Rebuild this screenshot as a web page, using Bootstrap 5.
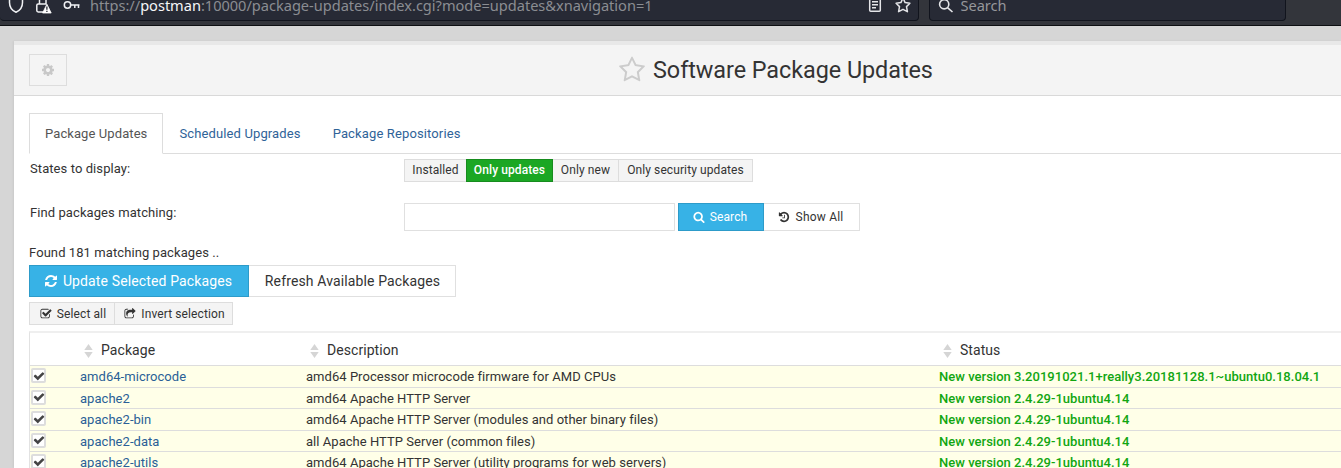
<!DOCTYPE html>
<html lang="en">
<head>
<meta charset="utf-8">
<title>Software Package Updates</title>
<link href="https://cdn.jsdelivr.net/npm/bootstrap@5.3.0/dist/css/bootstrap.min.css" rel="stylesheet">
<style>
body{font-family:Roboto,"Liberation Sans",sans-serif;font-size:13px;line-height:18px;letter-spacing:.08px;color:#333;background:#d6d6d6;height:468px;overflow:hidden}
a{text-decoration:none}
.ico{width:1em;height:1em;fill:currentColor;flex:none}
/* browser toolbar */
.toolbar{height:26px;background:#33353b;border-bottom:1px solid #0d0f12;font-family:"Noto Sans",sans-serif;font-size:14.6px;letter-spacing:-.02px;color:#8b8d92}
.field{height:21px;background:#272a35;border:1px solid #11141d;border-top:0;border-radius:0 0 4px 4px}
.field svg{flex:none;display:block}
.url{width:919px;padding-left:6px;border-left:0}
.find{width:357px;margin-left:10px;padding-left:8px}
.txt{height:21px;line-height:20px;margin-top:-5px;white-space:pre}
.url b{font-weight:400;color:#f5f6f8}
/* page panel */
.panel{margin:15px 0 0 14px;height:427px;background:#fff;overflow:hidden;box-shadow:-1px 0 2px rgba(0,0,0,.06)}
.head{height:55px;border-top:4px solid #e8e8e8;border-bottom:1px solid #d9d9d9;background:#f4f4f4;padding-left:15px}
.btn.gear{width:38px;height:32px;border:1px solid #ddd;border-radius:0;color:#c8c8c8;font-size:14px;padding:0}
.head h1{font-size:23.4px;line-height:30px;letter-spacing:-.05px;margin:0;color:#333}
.content{padding-left:15px}
.nav-tabs{margin-top:17px;height:41px;border-bottom:1px solid #ddd;flex-wrap:nowrap}
.nav-tabs .nav-link{height:41px;padding:11px 15px 0;border-radius:0;line-height:18px;letter-spacing:.13px;color:#2f6398;margin:0}
.nav-tabs .nav-link.active{color:#555;border-color:#ddd #ddd #fff;letter-spacing:.09px}
.lbl{width:375px;padding:1px 0 0 1px;flex:none}
.btn{--bs-btn-border-radius:0;border-radius:0;letter-spacing:.1px;display:flex;align-items:center;justify-content:center;padding:0;color:#333;background:#fff;border:1px solid #e0e0e0}
.btn-tiny{height:23px;font-size:12px;line-height:21px;background:#f4f4f4;border-color:#ddd}
.btn-mid{height:28px;font-size:12px}
.btn-big{height:32px;font-size:14px;letter-spacing:.13px}
.btn-go{background:#37b2e6;border-color:#2d9bc9;color:#fff}
.btn-on{background:#1ba724;border-color:#178c1e;color:#fff;font-weight:500}
.box{width:271px;height:28px;border:1px solid #e0e0e0;border-radius:0;padding:0 8px}
.pkgs{width:1320px;table-layout:fixed;border-left:1px solid #e2e2e2;border-top:2px solid #efefef;margin-top:6px;border-collapse:separate;border-spacing:0}
.pkgs th{height:33px;font-size:14px;font-weight:400;padding:1px 0 0 4px;border-bottom:1px solid #ddd;vertical-align:middle;letter-spacing:.06px}
.pkgs td{height:21.5px;padding:1px 0 0;border-bottom:1px solid #ddd;background:#ffffe8;line-height:19.5px;vertical-align:top;white-space:nowrap;letter-spacing:.04px}
.pkgs td a{color:#2a5f97}
.pkgs td.new{color:#11a611;font-weight:500;letter-spacing:.02px}
.sort{width:9px;height:14px;margin-right:8px;fill:#d5d5d5}
.tick{width:15px;height:15px;margin:1px 0 0 1px;border:2px solid #ddd;border-radius:2px;background:#fff;color:#444;display:flex;align-items:center;justify-content:center;font-size:12px}
</style>
<script src="https://cdn.jsdelivr.net/npm/bootstrap@5.3.0/dist/js/bootstrap.bundle.min.js"></script>
</head>
<body>
<svg width="0" height="0" class="d-none">
<symbol id="search" viewBox="0 0 1792 1792"><path d="M1216 832q0-185-131.500-316.500t-316.500-131.500-316.500 131.500-131.500 316.500 131.500 316.500 316.500 131.500 316.500-131.500 131.500-316.500zm512 832q0 52-38 90t-90 38q-54 0-90-38l-343-342q-179 124-399 124-143 0-273.500-55.500t-225-150-150-225-55.500-273.500 55.500-273.500 150-225 225-150 273.500-55.500 273.500 55.500 225 150 150 225 55.500 273.500q0 220-124 399l343 343q37 37 37 90z"/></symbol>
<symbol id="cog" viewBox="0 0 1792 1792"><path d="M1152 896q0-106-75-181t-181-75-181 75-75 181 75 181 181 75 181-75 75-181zm512-109v222q0 12-8 23t-20 13l-185 28q-19 54-39 91 35 50 107 138 10 12 10 25t-9 23q-27 37-99 108t-94 71q-12 0-26-9l-138-108q-44 23-91 38-16 136-29 186-7 28-36 28h-222q-14 0-24.500-8.500t-11.500-21.500l-28-184q-49-16-90-37l-141 107q-10 9-25 9-14 0-25-11-126-114-165-168-7-10-7-23 0-12 8-23 15-21 51-66.500t54-70.500q-27-50-41-99l-183-27q-13-2-21-12.500t-8-23.500v-222q0-12 8-23t19-13l186-28q14-46 39-92-40-57-107-138-10-12-10-24 0-10 9-23 26-36 98.500-107.500t94.500-71.500q13 0 26 10l138 107q44-23 91-38 16-136 29-186 7-28 36-28h222q14 0 24.500 8.500t11.500 21.500l28 184q49 16 90 37l142-107q9-9 24-9 13 0 25 10 129 119 165 170 7 8 7 22 0 12-8 23-15 21-51 66.500t-54 70.500q26 50 41 98l183 28q13 2 21 12.500t8 23.500z"/></symbol>
<symbol id="staro" viewBox="0 0 1792 1792"><path d="M1201 1004l306-297-422-62-189-382-189 382-422 62 306 297-73 421 378-199 377 199zm527-357q0 22-26 48l-363 354 86 500q1 7 1 20 0 50-41 50-19 0-40-12l-449-236-449 236q-22 12-40 12-21 0-31.500-14.500t-10.500-35.500q0-6 2-20l86-500-364-354q-25-27-25-48 0-37 56-46l502-73 225-455q19-41 49-41t49 41l225 455 502 73q56 9 56 46z"/></symbol>
<symbol id="refresh" viewBox="0 0 1792 1792"><path d="M1639 1056q0 5-1 7-64 268-268 434.500t-478 166.500q-146 0-282.500-55t-243.500-157l-129 129q-19 19-45 19t-45-19-19-45v-448q0-26 19-45t45-19h448q26 0 45 19t19 45-19 45l-137 137q71 66 161 102t187 36q134 0 250-65t186-179q11-17 53-117 8-23 30-23h192q13 0 22.500 9.500t9.500 22.500zm25-800v448q0 26-19 45t-45 19h-448q-26 0-45-19t-19-45 19-45l138-138q-148-137-349-137-134 0-250 65t-186 179q-11 17-53 117-8 23-30 23h-199q-13 0-22.500-9.500t-9.500-22.500v-7q65-268 270-434.500t480-166.500q146 0 284 55.500t245 156.500l130-129q19-19 45-19t45 19 19 45z"/></symbol>
<symbol id="history" viewBox="0 0 1792 1792"><path d="M1664 896q0 156-61 298t-164 245-245 164-298 61q-172 0-327-72.500t-264-204.500q-7-10-6.500-22.500t8.500-20.500l137-138q10-9 25-9 16 2 23 12 73 95 179 147t225 52q104 0 198.500-40.500t163.500-109.500 109.500-163.500 40.500-198.500-40.500-198.500-109.500-163.500-163.500-109.500-198.500-40.500q-98 0-188 35.500t-160 101.500l137 138q31 30 14 69-17 40-59 40h-448q-26 0-45-19t-19-45v-448q0-42 40-59 39-17 69 14l130 129q107-101 244.500-156.500t284.500-55.500q156 0 298 61t245 164 164 245 61 298zm-640-288v448q0 14-9 23t-23 9h-320q-14 0-23-9t-9-23v-64q0-14 9-23t23-9h224v-352q0-14 9-23t23-9h64q14 0 23 9t9 23z"/></symbol>
<symbol id="checksq" viewBox="0 0 1792 1792"><path d="M1472 930v318q0 119-84.500 203.500t-203.500 84.500h-832q-119 0-203.500-84.500t-84.500-203.500v-832q0-119 84.500-203.500t203.500-84.500h832q63 0 117 25 15 7 18 23 3 17-9 29l-49 49q-10 10-23 10-3 0-9-2-23-6-45-6h-832q-66 0-113 47t-47 113v832q0 66 47 113t113 47h832q66 0 113-47t47-113v-254q0-13 9-22l64-64q10-10 23-10 6 0 12 3 20 8 20 29zm231-489l-814 814q-24 24-57 24t-57-24l-430-430q-24-24-24-57t24-57l110-110q24-24 57-24t57 24l263 263 647-647q24-24 57-24t57 24l110 110q24 24 24 57t-24 57z"/></symbol>
<symbol id="share" viewBox="0 0 1792 1792"><path d="M1472 989v259q0 119-84.500 203.500t-203.500 84.500h-832q-119 0-203.500-84.500t-84.500-203.500v-832q0-119 84.500-203.500t203.500-84.500h255q13 0 22.500 9.500t9.500 22.500q0 27-26 32-77 26-133 60-10 4-16 4h-112q-66 0-113 47t-47 113v832q0 66 47 113t113 47h832q66 0 113-47t47-113v-214q0-19 18-29 28-13 54-37 16-16 35-8 21 9 21 29zm237-496l-384 384q-18 19-45 19-12 0-25-5-39-17-39-59v-192h-160q-323 0-438 131-119 137-74 473 3 23-20 34-8 2-12 2-16 0-26-13-10-14-21-31t-39.500-68.500-49.500-99.500-38.500-114-17.500-122q0-49 3.500-91t14-90 28-88 47-81.500 68.500-74 94.500-61.500 124.500-48.500 159.500-30.500 196.500-11h160v-192q0-42 39-59 13-5 25-5 26 0 45 19l384 384q19 19 19 45t-19 45z"/></symbol>
<symbol id="check" viewBox="0 0 1792 1792"><path d="M1671 566q0 40-28 68l-724 724-136 136q-28 28-68 28t-68-28l-136-136-362-362q-28-28-28-68t28-68l136-136q28-28 68-28t68 28l294 295 656-657q28-28 68-28t68 28l136 136q28 28 28 68z"/></symbol>
<symbol id="updown" viewBox="0 0 9 14"><path d="M4.500 0L8.700 6H.3zM.3 8h8.400L4.500 14z"/></symbol>
</svg>

<header class="toolbar d-flex align-items-start">
  <div class="field url d-flex">
    <svg width="20" height="16" viewBox="0 0 20 16" fill="none" stroke="#f0f1f4" stroke-width="1.500"><path d="M3.500-2V2.500C3.500 7 6 10.500 10 12.300 14 10.500 16.500 7 16.500 2.500V-2"/></svg>
    <svg class="ms-2" width="20" height="16" viewBox="34 0 20 16"><path d="M39.500 4V-2M46 4V-2M45 12H38.200Q36.800 12 36.800 10.600V5.300Q36.800 4 38.200 4H46.500" fill="none" stroke="#f0f1f4" stroke-width="1.500"/><path d="M46.900 4.200L51.200 13H42.600Z" fill="#fff" stroke="#fff" stroke-width=".8" stroke-linejoin="round"/><path d="M46.900 6.500V9.800M46.900 10.800V12" stroke="#272a35" stroke-width="1.300"/></svg>
    <svg class="ms-2" width="20" height="16" viewBox="62 0 20 16" fill="none" stroke="#f0f1f4" stroke-width="1.500"><circle cx="67.500" cy="5" r="3.200"/><path d="M70.700 5H79.500M74.800 5V8M78.500 5V8"/></svg>
    <div class="txt" style="margin-left:8px">https://<b>postman</b>:10000/package-updates/index.cgi?mode=updates&amp;xnavigation=1</div>
    <svg class="ms-auto" width="16" height="16" viewBox="867 0 16 16" fill="none" stroke="#e4e5e8" stroke-width="1.500"><path d="M869.700-2V10.300Q869.700 11.300 870.700 11.300H879.300Q880.300 11.300 880.300 10.300V-2M872 1.700H878M872 4.700H878M872 7.700H876"/></svg>
    <svg style="margin:0 6px 0 11px" width="18" height="16" viewBox="894 0 18 16" fill="none" stroke="#e4e5e8" stroke-width="1.500" stroke-linejoin="round"><path d="M903-2L905.100 2.600 909.900 3.200 906.500 6.600 907.400 11.700 903 9.300 898.600 11.700 899.500 6.600 896.100 3.200 900.900 2.600Z"/></svg>
  </div>
  <div class="field find d-flex">
    <svg width="16" height="16" viewBox="938 0 16 16" fill="none" stroke="#e4e5e8" stroke-width="1.600"><circle cx="944.200" cy="4.300" r="4.600"/><path d="M947.500 7.600L952.500 12"/></svg>
    <div class="txt" style="margin-left:6.500px;color:#96979b">Search</div>
  </div>
</header>

<main class="panel">
  <div class="head d-flex align-items-center">
    <button class="btn gear bg-transparent" type="button"><svg class="ico"><use href="#cog"/></svg></button>
    <svg class="ico" style="margin-left:551px;font-size:28px;color:#ccc"><use href="#staro"/></svg>
    <h1 class="fw-normal" style="margin-left:7px">Software Package Updates</h1>
  </div>
  <div class="content">
    <ul class="nav nav-tabs">
      <li class="nav-item"><a class="nav-link active" href="#">Package Updates</a></li>
      <li class="nav-item"><a class="nav-link" href="#">Scheduled Upgrades</a></li>
      <li class="nav-item"><a class="nav-link" href="#">Package Repositories</a></li>
    </ul>
    <div class="d-flex" style="margin-top:5px">
      <div class="lbl">States to display:</div>
      <div class="d-flex">
        <button class="btn btn-tiny border-end-0" style="width:62px">Installed</button>
        <button class="btn btn-tiny btn-on" style="width:87px">Only updates</button>
        <button class="btn btn-tiny border-start-0 border-end-0" style="width:65px">Only new</button>
        <button class="btn btn-tiny" style="width:135px">Only security updates</button>
      </div>
    </div>
    <div class="d-flex" style="margin-top:21px">
      <div class="lbl">Find packages matching:</div>
      <input class="box" type="text" aria-label="Find packages matching">
      <button class="btn btn-mid btn-go" style="width:86px;margin-left:3px;padding-right:2px;gap:5px"><svg class="ico" style="font-size:12px"><use href="#search"/></svg>Search</button>
      <button class="btn btn-mid border-start-0" style="width:96px;padding-right:2px;gap:6px;letter-spacing:.2px"><svg class="ico" style="font-size:12px"><use href="#history"/></svg>Show All</button>
    </div>
    <div style="margin-top:13px;height:21px">Found 181 matching packages ..</div>
    <div class="d-flex">
      <button class="btn btn-big btn-go" style="width:220px;padding-right:2px;gap:5px"><svg class="ico"><use href="#refresh"/></svg>Update Selected Packages</button>
      <button class="btn btn-big border-start-0" style="width:207px;padding-left:1px">Refresh Available Packages</button>
    </div>
    <div class="d-flex" style="margin-top:5px">
      <button class="btn btn-tiny border-end-0" style="width:85px;padding:1px 0 0 2px;gap:5px"><svg class="ico" style="font-size:12px"><use href="#checksq"/></svg>Select all</button>
      <button class="btn btn-tiny" style="width:119px;padding:1px 0 0 2px;gap:5px"><svg class="ico" style="font-size:12px"><use href="#share"/></svg>Invert selection</button>
    </div>
    <table class="pkgs">
      <colgroup><col style="width:50px"><col style="width:226px"><col style="width:633px"><col></colgroup>
      <thead><tr><th></th>
        <th><svg class="sort"><use href="#updown"/></svg>Package</th>
        <th><svg class="sort"><use href="#updown"/></svg>Description</th>
        <th><svg class="sort"><use href="#updown"/></svg>Status</th></tr></thead>
      <tbody>
        <tr><td><span class="tick"><svg class="ico"><use href="#check"/></svg></span></td><td><a href="#">amd64-microcode</a></td><td>amd64 Processor microcode firmware for AMD CPUs</td><td class="new">New version 3.20191021.1+really3.20181128.1~ubuntu0.18.04.1</td></tr>
        <tr><td><span class="tick"><svg class="ico"><use href="#check"/></svg></span></td><td><a href="#">apache2</a></td><td>amd64 Apache HTTP Server</td><td class="new">New version 2.4.29-1ubuntu4.14</td></tr>
        <tr><td><span class="tick"><svg class="ico"><use href="#check"/></svg></span></td><td><a href="#">apache2-bin</a></td><td>amd64 Apache HTTP Server (modules and other binary files)</td><td class="new">New version 2.4.29-1ubuntu4.14</td></tr>
        <tr><td><span class="tick"><svg class="ico"><use href="#check"/></svg></span></td><td><a href="#">apache2-data</a></td><td>all Apache HTTP Server (common files)</td><td class="new">New version 2.4.29-1ubuntu4.14</td></tr>
        <tr><td><span class="tick"><svg class="ico"><use href="#check"/></svg></span></td><td><a href="#">apache2-utils</a></td><td>amd64 Apache HTTP Server (utility programs for web servers)</td><td class="new">New version 2.4.29-1ubuntu4.14</td></tr>
      </tbody>
    </table>
  </div>
</main>
</body>
</html>
